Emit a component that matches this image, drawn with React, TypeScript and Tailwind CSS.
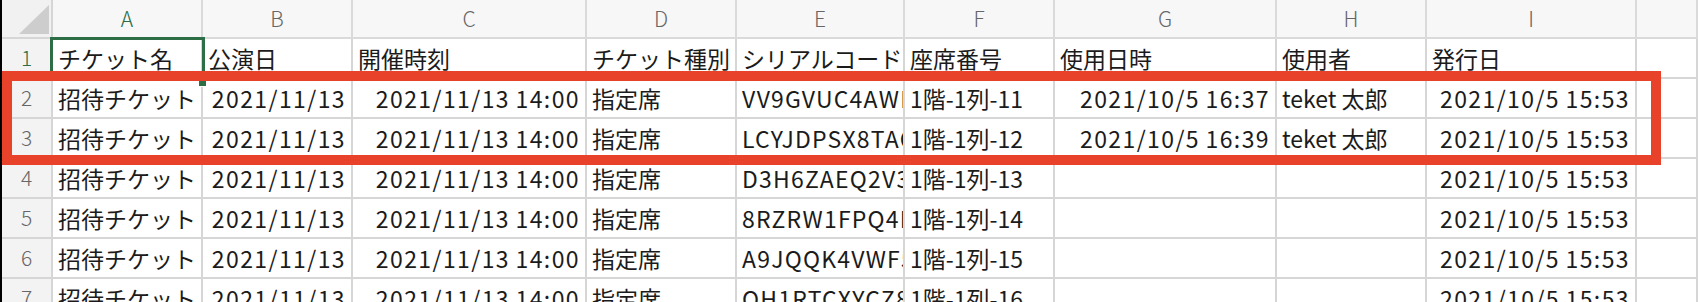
import React from 'react';

const COLS = ['A', 'B', 'C', 'D', 'E', 'F', 'G', 'H', 'I', ''];

// r = right aligned (dates), c = serial code, otherwise plain text
type Cell = string | { r: string } | { c: string };

const ROWS: { n: number; cells: Cell[] }[] = [
  { n: 1, cells: ['チケット名', '公演日', '開催時刻', 'チケット種別', 'シリアルコード', '座席番号', '使用日時', '使用者', '発行日', ''] },
  { n: 2, cells: ['招待チケット', { r: '2021/11/13' }, { r: '2021/11/13 14:00' }, '指定席', { c: 'VV9GVUC4AWK7' }, '1階-1列-11', { r: '2021/10/5 16:37' }, 'teket 太郎', { r: '2021/10/5 15:53' }, ''] },
  { n: 3, cells: ['招待チケット', { r: '2021/11/13' }, { r: '2021/11/13 14:00' }, '指定席', { c: 'LCYJDPSX8TAQ' }, '1階-1列-12', { r: '2021/10/5 16:39' }, 'teket 太郎', { r: '2021/10/5 15:53' }, ''] },
  { n: 4, cells: ['招待チケット', { r: '2021/11/13' }, { r: '2021/11/13 14:00' }, '指定席', { c: 'D3H6ZAEQ2V3M' }, '1階-1列-13', '', '', { r: '2021/10/5 15:53' }, ''] },
  { n: 5, cells: ['招待チケット', { r: '2021/11/13' }, { r: '2021/11/13 14:00' }, '指定席', { c: '8RZRW1FPQ4IB' }, '1階-1列-14', '', '', { r: '2021/10/5 15:53' }, ''] },
  { n: 6, cells: ['招待チケット', { r: '2021/11/13' }, { r: '2021/11/13 14:00' }, '指定席', { c: 'A9JQQK4VWF5N' }, '1階-1列-15', '', '', { r: '2021/10/5 15:53' }, ''] },
  { n: 7, cells: ['招待チケット', { r: '2021/11/13' }, { r: '2021/11/13 14:00' }, '指定席', { c: 'QH1RTCXYCZ8P' }, '1階-1列-16', '', '', { r: '2021/10/5 15:53' }, ''] },
];

const GRID = 'grid grid-cols-[51px_150px_150px_234px_150px_168px_150px_222px_150px_210px_1fr]';

export default function App() {
  return (
    <div
      className="relative w-[1698px] h-[302px] overflow-hidden bg-white border-l-2 border-black text-[#1b1b1b]"
      style={{ fontFamily: '"Noto Sans CJK JP", "Noto Sans", sans-serif' }}
    >
      {/* column headers */}
      <div className={`${GRID} h-[39px] bg-[#f7f7f7]`}>
        <div className="relative border-r-2 border-b-2 border-[#d6d6d6] bg-[#f1f1f1]">
          <svg className="absolute left-[17px] top-[5px]" width="30" height="29" viewBox="0 0 30 29">
            <polygon points="30,0 30,29 0,29" fill="#cdcdcd" />
          </svg>
        </div>
        {COLS.map((c, i) => (
          <div
            key={i}
            className={`flex items-center justify-center border-r-2 border-b-2 text-[21px] font-light ${
              i === 0 ? 'border-b-[#2e6e47] border-r-[#dadada] text-[#2e6e47]' : 'border-[#dadada] text-[#666666]'
            }`}
          >
            {c}
          </div>
        ))}
      </div>

      {ROWS.map((row) => (
        <div key={row.n} className={`${GRID} h-[40px]`}>
          <div
            className={`flex items-center justify-center border-r-2 border-b-2 border-[#d6d6d6] bg-[#f3f3f3] text-[21px] font-light ${
              row.n === 1 ? 'text-[#2e6e47]' : 'text-[#666666]'
            }`}
          >
            {row.n}
          </div>
          {row.cells.map((cell, i) => {
            if (typeof cell === 'string') {
              return (
                <div
                  key={i}
                  className="flex items-center overflow-hidden whitespace-nowrap border-r-2 border-b-2 border-[#d6d6d6] pl-[5px] text-[23px]"
                >
                  {cell}
                </div>
              );
            }
            if ('r' in cell) {
              return (
                <div
                  key={i}
                  className="flex items-center justify-end overflow-hidden whitespace-nowrap border-r-2 border-b-2 border-[#d6d6d6] pr-[5px] text-[23px] tracking-[1.4px] [word-spacing:-1px]"
                >
                  {cell.r}
                </div>
              );
            }
            return (
              <div
                key={i}
                className="flex items-center overflow-hidden whitespace-nowrap border-r-2 border-b-2 border-[#d6d6d6] pl-[5px] text-[23px] tracking-[1.2px]"
              >
                {cell.c}
              </div>
            );
          })}
        </div>
      ))}

      {/* selected cell A1 */}
      <div className="absolute left-[48px] top-[37px] w-[155px] h-[44px] border-[3px] border-[#2e6e47]" />
      <div className="absolute left-[196px] top-[78px] w-[9px] h-[9px] bg-[#2e6e47] border border-white" />

      {/* red annotation frame */}
      <div className="absolute left-0 top-[71px] w-[1659px] h-[94px] border-[10px] border-[#e8422b]" />
    </div>
  );
}
